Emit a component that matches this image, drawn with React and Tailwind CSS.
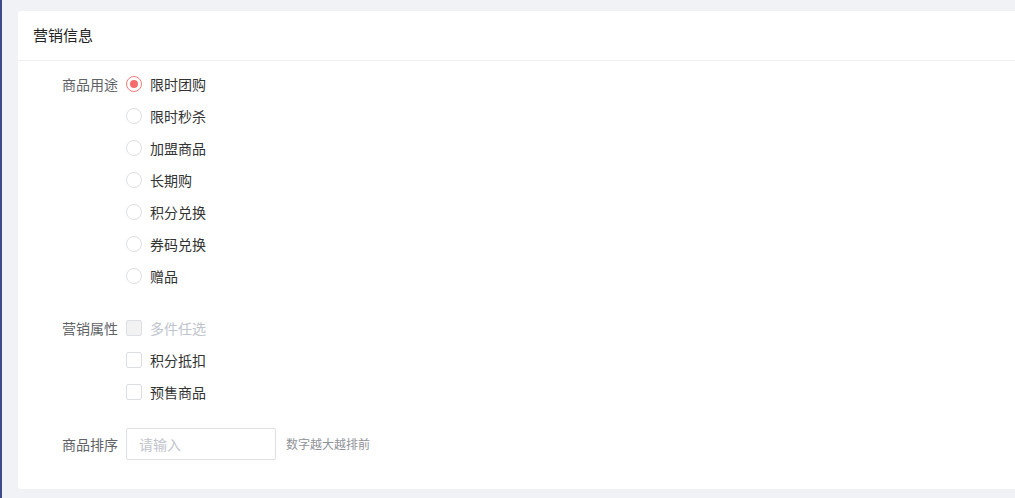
import React from "react";

const radios = ["限时团购", "限时秒杀", "加盟商品", "长期购", "积分兑换", "券码兑换", "赠品"];

function Radio({ checked, label }) {
  return (
    <div className="flex items-center h-8">
      <span
        className={`w-4 h-4 rounded-full border flex items-center justify-center bg-white ${
          checked ? "border-[#f47a7a]" : "border-[#dcdfe6]"
        }`}
      >
        {checked && <span className="w-2 h-2 rounded-full bg-[#f56c6c]" />}
      </span>
      <span className="ml-2 text-[14px] text-[#333]">{label}</span>
    </div>
  );
}

function Checkbox({ disabled, label }) {
  return (
    <div className="flex items-center h-8">
      <span
        className={`w-4 h-4 rounded-[2px] border border-[#dcdfe6] ${disabled ? "bg-[#f2f2f2]" : "bg-white"}`}
      />
      <span className={`ml-2 text-[14px] ${disabled ? "text-[#c0c4cc]" : "text-[#333]"}`}>{label}</span>
    </div>
  );
}

function Row({ label, children, className = "" }) {
  return (
    <div className={`flex ${className}`}>
      <div className="w-[108px] pr-2 text-right text-[14px] text-[#606266] h-8 leading-8 shrink-0">{label}</div>
      <div className="flex flex-col">{children}</div>
    </div>
  );
}

export default function App() {
  return (
    <div
      className="w-[1015px] h-[498px] bg-[#f0f2f5] border-l-2 border-[#3d4a8c] overflow-hidden"
      style={{ fontFamily: '"Noto Sans CJK SC", "Noto Sans", sans-serif' }}
    >
      <div className="ml-4 mt-[11px] h-[478px] bg-white rounded-tl-[3px] rounded-bl-[3px]">
        <div className="h-[50px] border-b border-[#ebeef5] flex items-center pl-[15px] text-[15px] text-[#222]">
          营销信息
        </div>
        <div className="pt-[7px]">
          <Row label="商品用途">
            {radios.map((r, i) => (
              <Radio key={r} label={r} checked={i === 0} />
            ))}
          </Row>
          <Row label="营销属性" className="mt-5">
            <Checkbox disabled label="多件任选" />
            <Checkbox label="积分抵扣" />
            <Checkbox label="预售商品" />
          </Row>
          <div className="flex mt-5 items-center">
            <div className="w-[108px] pr-2 text-right text-[14px] text-[#606266] shrink-0">商品排序</div>
            <div className="w-[150px] h-8 border border-[#dcdfe6] rounded-[2px] flex items-center px-3 text-[14px] text-[#c0c4cc]">
              请输入
            </div>
            <span className="ml-[10px] text-[12px] text-[#909399]">数字越大越排前</span>
          </div>
        </div>
      </div>
    </div>
  );
}
